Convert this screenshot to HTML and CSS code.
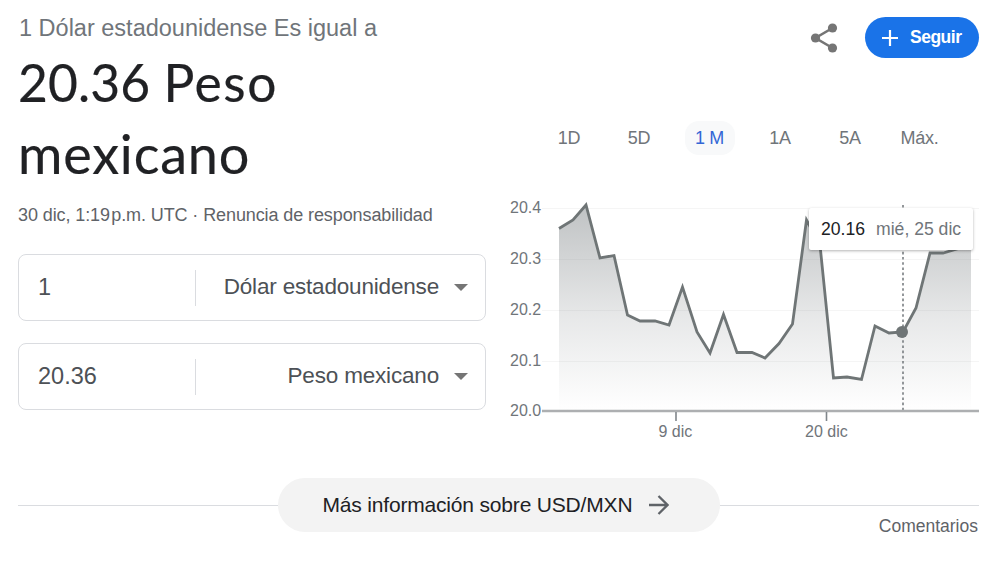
FILE: index.html
```html
<!DOCTYPE html>
<html lang="es">
<head>
    <meta charset="UTF-8">
    <meta name="viewport" content="width=device-width, initial-scale=1.0">
    <title>USD/MXN</title>
    <link rel="stylesheet" href="styles.css">
</head>
<body>
    <div class="card">
        <div class="main">
            <div class="converter">
                <div class="from-label">1 Dólar estadounidense Es igual a</div>
                <div class="result">20.36 <span class="result-name">Peso</span><br><span class="result-unit">mexicano</span></div>
                <div class="date">30 dic, 1:19&#8202;p.m. UTC · <span>Renuncia de responsabilidad</span></div>
                <div class="field">
                    <div class="amount">1</div>
                    <div class="currency"><span>Dólar estadounidense</span><i class="arrow"></i></div>
                </div>
                <div class="field">
                    <div class="amount">20.36</div>
                    <div class="currency"><span>Peso mexicano</span><i class="arrow"></i></div>
                </div>
            </div>
            <div class="history">
                <div class="actions">
                    <svg class="share" width="28" height="30" viewBox="0 0 28 30">
                        <path d="M22.500 5 5.500 15l17 10" fill="none" stroke="#757575" stroke-width="2.600"/>
                        <circle cx="22.500" cy="5" r="4.600" fill="#757575"/>
                        <circle cx="5.500" cy="15" r="4.600" fill="#757575"/>
                        <circle cx="22.500" cy="25" r="4.600" fill="#757575"/>
                    </svg>
                    <div class="follow">
                        <svg width="16" height="16" viewBox="0 0 16 16"><path d="M8 0v16M0 8h16" stroke="#fff" stroke-width="2.200"/></svg>
                        <span>Seguir</span>
                    </div>
                </div>
                <div class="tabs">
                    <span>1D</span>
                    <span>5D</span>
                    <span class="active">1 M</span>
                    <span>1A</span>
                    <span>5A</span>
                    <span>Máx.</span>
                </div>
                <div class="chart">
                    <svg width="480" height="255" viewBox="0 0 480 255">
                        <defs>
                            <linearGradient id="fade" gradientUnits="userSpaceOnUse" x1="0" y1="15" x2="0" y2="221">
                                <stop offset="0" stop-color="#757b7e" stop-opacity=".46"/>
                                <stop offset=".55" stop-color="#757b7e" stop-opacity=".17"/>
                                <stop offset="1" stop-color="#757b7e" stop-opacity="0"/>
                            </linearGradient>
                        </defs>
                        <path class="grid" d="M42 18.500H479M42 69.500H479M42 120.500H479M42 171.500H479"/>
                        <path fill="url(#fade)" d="M59 38.500 73 30 86 15 100 68 114 65.500 127.500 125 140 131H155L169 135 182.500 97 197 142 210 163 223.500 124.500 237 162.500H252L265 168 279 153.500 292.500 134 306.500 30 320 55 333.500 188 347 187 361.500 189.500 375 136 389 143 403 142 416 118 430 63H443L457 59 471 55V221H59Z"/>
                        <path class="line" d="M59 38.500 73 30 86 15 100 68 114 65.500 127.500 125 140 131H155L169 135 182.500 97 197 142 210 163 223.500 124.500 237 162.500H252L265 168 279 153.500 292.500 134 306.500 30 320 55 333.500 188 347 187 361.500 189.500 375 136 389 143 403 142 416 118 430 63H443L457 59 471 55"/>
                        <path class="cursor" d="M403 15V220"/>
                        <circle cx="402" cy="142" r="6" fill="#6f7576"/>
                        <path class="axis" d="M42 221H479"/>
                        <path class="tick" d="M176 222V231M326.500 222V231"/>
                        <g class="labels">
                            <text x="10" y="23">20.4</text>
                            <text x="10" y="74">20.3</text>
                            <text x="10" y="125">20.2</text>
                            <text x="10" y="176">20.1</text>
                            <text x="10" y="226">20.0</text>
                            <text x="158.500" y="247">9 dic</text>
                            <text x="305" y="247">20 dic</text>
                        </g>
                    </svg>
                    <div class="tooltip"><b>20.16</b><span>mié, 25 dic</span></div>
                </div>
            </div>
        </div>
        <div class="more">
            <div class="more-btn">
                <span>Más información sobre USD/MXN</span>
                <svg width="20" height="20" viewBox="0 0 20 20"><path d="M0 10H18M9.500 1 18.500 10 9.500 19" fill="none" stroke="#5f6368" stroke-width="2.300"/></svg>
            </div>
        </div>
        <div class="feedback">Comentarios</div>
    </div>
</body>
</html>
```

FILE: styles.css
```css
body {
    margin: 0;
    background: #fff;
    font-family: "Liberation Sans", Arial, sans-serif;
    color: #70757a;
}
.card {
    padding: 0 24px 0 18px;
}
.main {
    display: flex;
    height: 478px;
}
.converter {
    width: 468px;
    padding-top: 14px;
}
.from-label {
    font-size: 23.5px;
    line-height: 28px;
    padding-left: 1px;
    white-space: nowrap;
}
.result {
    height: 144px;
    margin-top: 4px;
    font-family: Lato, sans-serif;
    font-size: 51.5px;
    line-height: 72px;
    letter-spacing: 0.1px;
    color: #202124;
    -webkit-text-stroke: 0.2px #202124;
    white-space: nowrap;
}
.result-name {
    letter-spacing: 1.6px;
}
.result-unit {
    font-size: 54px;
    line-height: 70px;
    letter-spacing: 0.8px;
}
.date {
    margin-top: 14px;
    margin-bottom: 28px;
    font-size: 18px;
    line-height: 22px;
    letter-spacing: -0.1px;
    color: #5f6368;
    white-space: nowrap;
}
.field {
    display: flex;
    align-items: center;
    box-sizing: border-box;
    height: 67px;
    margin-bottom: 22px;
    border: 1px solid #dadce0;
    border-radius: 8px;
    font-size: 22.5px;
    color: #4d5156;
}
.amount {
    box-sizing: border-box;
    width: 177px;
    height: 36px;
    padding-left: 19px;
    border-right: 1px solid #dadce0;
    font-size: 23.5px;
    line-height: 34px;
}
.currency {
    display: flex;
    flex: 1;
    align-items: center;
    justify-content: flex-end;
    padding: 0 17px 2px 0;
    line-height: 34px;
    letter-spacing: -0.18px;
    white-space: nowrap;
}
.arrow {
    margin: 2px 0 0 15px;
    border: 7px solid transparent;
    border-top-color: #757575;
    border-bottom: 0;
}
.history {
    width: 480px;
    margin-left: 14px;
}
.actions {
    display: flex;
    align-items: center;
    justify-content: flex-end;
    height: 41px;
    padding-top: 17px;
}
.share {
    margin-right: 27px;
}
.follow {
    display: flex;
    align-items: center;
    box-sizing: border-box;
    width: 114px;
    height: 41px;
    margin-right: 1px;
    padding-left: 17px;
    gap: 12px;
    border-radius: 21px;
    background: #1a73e8;
    color: #fff;
    font-size: 17.5px;
    font-weight: bold;
    letter-spacing: -0.5px;
}
.tabs {
    display: grid;
    grid-template-columns: 70px 70px 71px 70px 70px 69px;
    height: 34px;
    margin: 63px 0 35px 34px;
    font-size: 18px;
    line-height: 34px;
    letter-spacing: -0.3px;
    text-align: center;
}
.tabs span {
    justify-self: center;
}
.tabs .active {
    width: 50px;
    border-radius: 14px;
    background: #f8f9fa;
    color: #3367d6;
}
.chart {
    position: relative;
    height: 255px;
}
.chart svg {
    display: block;
}
.grid {
    stroke: #f5f5f5;
}
.line {
    fill: none;
    stroke: #6f7576;
    stroke-width: 2.8;
    stroke-linejoin: miter;
}
.cursor {
    stroke: #70757a;
    stroke-width: 1.5;
    stroke-dasharray: 2.6 2.6;
}
.axis {
    stroke: #adafb1;
    stroke-width: 2.4;
}
.tick {
    stroke: #80868b;
    stroke-width: 1.6;
}
.labels {
    font-size: 16px;
    fill: #70757a;
}
.tooltip {
    position: absolute;
    left: 309px;
    top: 18px;
    display: flex;
    align-items: center;
    box-sizing: border-box;
    width: 164px;
    height: 42px;
    padding-left: 12px;
    gap: 11px;
    border-radius: 2px;
    background: #fff;
    box-shadow: 0 1px 3px rgba(0, 0, 0, .3);
    font-size: 17.6px;
    white-space: nowrap;
}
.tooltip b {
    font-weight: normal;
    color: #202124;
}
.more {
    display: flex;
    align-items: center;
    margin-right: 1px;
}
.more::before,
.more::after {
    content: "";
    flex: 1;
    height: 1px;
    background: #dadce0;
}
.more-btn {
    display: flex;
    align-items: center;
    box-sizing: border-box;
    width: 442px;
    height: 54px;
    padding-left: 45px;
    gap: 17px;
    border-radius: 27px;
    background: #f3f3f3;
    color: #202124;
    font-size: 21px;
    letter-spacing: -0.18px;
    white-space: nowrap;
}
.feedback {
    margin: -17px 2px 0 0;
    font-size: 17.5px;
    line-height: 22px;
    text-align: right;
    color: #5f6368;
}
```
